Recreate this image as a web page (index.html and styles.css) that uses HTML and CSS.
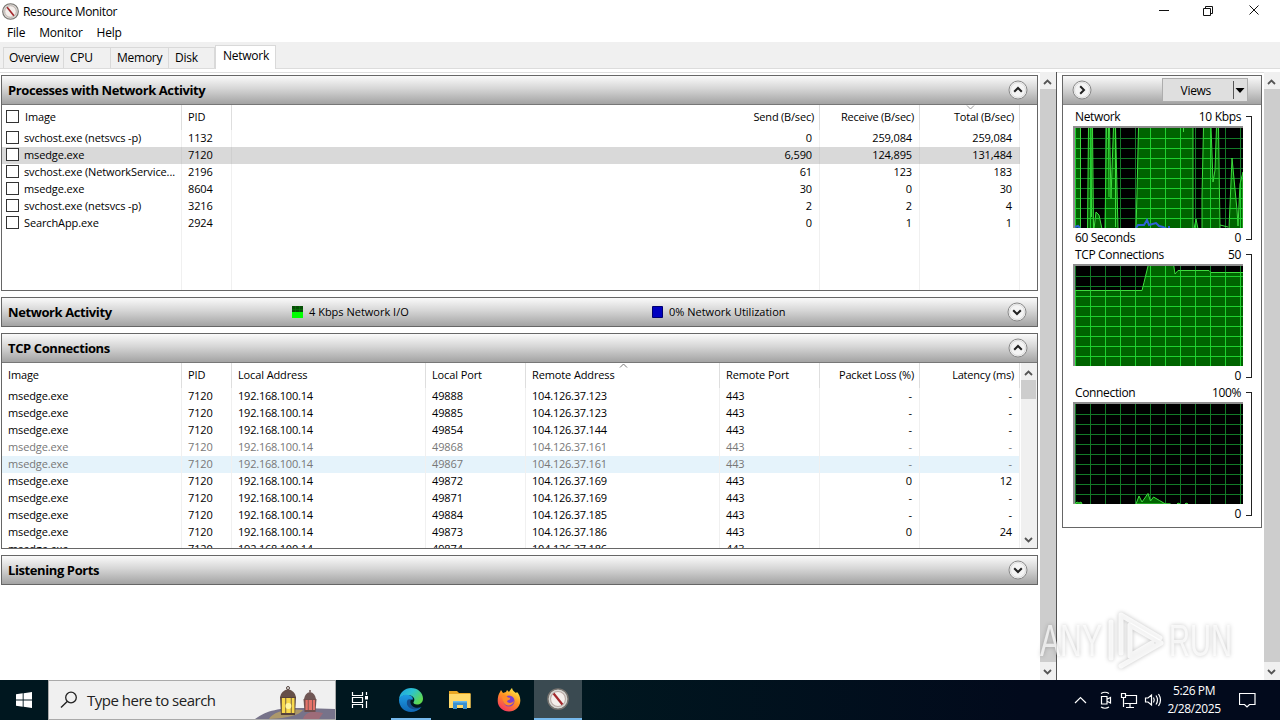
FILE: index.html
```html
<!DOCTYPE html>
<html lang="en">
<head>
    <meta charset="UTF-8">
    <title>Resource Monitor</title>
    <link rel="stylesheet" href="styles.css">
</head>
<body>
    <svg class="defs" width="0" height="0">
        <symbol id="up" viewBox="0 0 20 20"><circle cx="10" cy="10" r="9" fill="#f4f4f4" stroke="#888"/><circle cx="10" cy="10" r="7.5" fill="none" stroke="#dcdcdc"/><path d="M6.2 11.8 10 8l3.8 3.8" fill="none" stroke="#222" stroke-width="2"/></symbol>
        <symbol id="down" viewBox="0 0 20 20"><circle cx="10" cy="10" r="9" fill="#f4f4f4" stroke="#888"/><circle cx="10" cy="10" r="7.5" fill="none" stroke="#dcdcdc"/><path d="M6.2 8.2 10 12l3.8-3.8" fill="none" stroke="#222" stroke-width="2"/></symbol>
        <symbol id="right" viewBox="0 0 20 20"><circle cx="10" cy="10" r="9" fill="#f4f4f4" stroke="#888"/><circle cx="10" cy="10" r="7.5" fill="none" stroke="#dcdcdc"/><path d="M8.2 6.2 12 10l-3.8 3.8" fill="none" stroke="#222" stroke-width="2"/></symbol>
        <symbol id="s-up" viewBox="0 0 9 6"><path d="M1 5l3.5-3.5L8 5" fill="none" stroke="#555" stroke-width="1.8"/></symbol>
        <symbol id="s-down" viewBox="0 0 9 6"><path d="M1 1l3.5 3.5L8 1" fill="none" stroke="#555" stroke-width="1.8"/></symbol>
        <symbol id="gauge" viewBox="0 0 20 20"><circle cx="10" cy="10" r="9.2" fill="#d8d8d4" stroke="#77736f" stroke-width="1.3"/><circle cx="10" cy="10" r="6.8" fill="#f4efec" stroke="#b9a9a4"/><path d="M6 5l8 10" stroke="#a3282c" stroke-width="2"/></symbol>
        <symbol id="grid" viewBox="0 0 170 102"><path d="M2.5 1v101M17.5 1v101M32.5 1v101M47.5 1v101M62.5 1v101M77.5 1v101M92.5 1v101M107.5 1v101M122.5 1v101M137.5 1v101M152.5 1v101M167.5 1v101M2 12.5h168M2 22.5h168M2 32.5h168M2 42.5h168M2 52.5h168M2 62.5h168M2 72.5h168M2 82.5h168M2 92.5h168" fill="none" stroke="currentColor"/></symbol>
        <clipPath id="net-clip"><path id="net-area" d="M2 103V1h5.500v102zM14.500 103l1-102h4l1 102zM21 103l2-17 3 3 3 14zM32 103L33.500 1h3L38 72 40.500 1h2L45 103zM63 103l1-35L65.500 1H120v102zM121 103l2-10 2 10zM129 103V70L130.500 1H138l2 55 2-12 1.500-43h2L147 103zM156 103l3-71 5 52 1 16 2-42 3-12v58z"/></clipPath>
        <clipPath id="tcp-clip"><path id="tcp-area" d="M2 103V26.500h67l2-8L75.500 0h25l1.500 10 3-3.500h31l2 2h33V103z"/></clipPath>
    </svg>

    <div class="titlebar">
        <svg class="app-icon" width="17" height="17"><use href="#gauge"/></svg>
        <span class="title">Resource Monitor</span>
        <svg class="window-buttons" width="110" height="20" viewBox="0 0 110 20"><path d="M5 10.5h10M49.5 8.500h7v7h-7zM51.500 8.500v-2h7v7h-2M95.500 5.500l9 9M104.500 5.500l-9 9" fill="none" stroke="#111"/></svg>
    </div>
    <div class="menu"><span>File</span><span>Monitor</span><span>Help</span></div>
    <div class="tabs">
        <div class="tab overview">Overview</div>
        <div class="tab cpu">CPU</div>
        <div class="tab memory">Memory</div>
        <div class="tab disk">Disk</div>
        <div class="tab active">Network</div>
    </div>

    <div class="content">
        <div class="main">
            <section class="panel tall">
                <div class="panel-head"><b>Processes with Network Activity</b><svg class="toggle" width="20" height="20"><use href="#up"/></svg></div>
                <div class="table processes">
                    <div class="row head"><span><i class="check"></i>Image</span><span>PID</span><span class="num">Send (B/sec)</span><span class="num">Receive (B/sec)</span><span class="num">Total (B/sec)<svg class="sort" width="9" height="5"><path d="M1 .5l3.500 3.500L8 .5" fill="none" stroke="#999"/></svg></span></div>
                    <div class="row"><span><i class="check"></i>svchost.exe (netsvcs -p)</span><span>1132</span><span class="num">0</span><span class="num">259,084</span><span class="num">259,084</span></div>
                    <div class="row selected"><span><i class="check"></i>msedge.exe</span><span>7120</span><span class="num">6,590</span><span class="num">124,895</span><span class="num">131,484</span></div>
                    <div class="row"><span><i class="check"></i>svchost.exe (NetworkService...</span><span>2196</span><span class="num">61</span><span class="num">123</span><span class="num">183</span></div>
                    <div class="row"><span><i class="check"></i>msedge.exe</span><span>8604</span><span class="num">30</span><span class="num">0</span><span class="num">30</span></div>
                    <div class="row"><span><i class="check"></i>svchost.exe (netsvcs -p)</span><span>3216</span><span class="num">2</span><span class="num">2</span><span class="num">4</span></div>
                    <div class="row"><span><i class="check"></i>SearchApp.exe</span><span>2924</span><span class="num">0</span><span class="num">1</span><span class="num">1</span></div>
                    <div class="row filler"><span></span><span></span><span></span><span></span><span></span></div>
                </div>
            </section>

            <section class="panel">
                <div class="panel-head">
                    <b>Network Activity</b>
                    <div class="legend io"><svg width="12" height="12"><path fill="#064f06" d="M0 0h11v6H0z"/><path d="M3.500 0v6M7.500 0v6M0 3.500h11" stroke="#0a7a0a" stroke-width=".6"/><path fill="#0f0" d="M0 6h11v6H0z"/></svg>4 Kbps Network I/O</div>
                    <div class="legend util"><svg width="12" height="12"><path fill="#0000c0" stroke="#000070" d="M.5.5h10v11H.5z"/></svg>0% Network Utilization</div>
                    <svg class="toggle shifted" width="20" height="20"><use href="#down"/></svg>
                </div>
            </section>

            <section class="panel tall">
                <div class="panel-head"><b>TCP Connections</b><svg class="toggle" width="20" height="20"><use href="#up"/></svg></div>
                <div class="tcp-body">
                    <div class="table tcp">
                        <div class="row head"><span>Image</span><span>PID</span><span>Local Address</span><span>Local Port</span><span>Remote Address<svg class="sort" width="9" height="5"><path d="M1 4.500L4.500 1 8 4.500" fill="none" stroke="#777"/></svg></span><span>Remote Port</span><span class="num">Packet Loss (%)</span><span class="num">Latency (ms)</span></div>
                        <div class="row"><span>msedge.exe</span><span>7120</span><span>192.168.100.14</span><span>49888</span><span>104.126.37.123</span><span>443</span><span class="num">-</span><span class="num">-</span></div>
                        <div class="row"><span>msedge.exe</span><span>7120</span><span>192.168.100.14</span><span>49885</span><span>104.126.37.123</span><span>443</span><span class="num">-</span><span class="num">-</span></div>
                        <div class="row"><span>msedge.exe</span><span>7120</span><span>192.168.100.14</span><span>49854</span><span>104.126.37.144</span><span>443</span><span class="num">-</span><span class="num">-</span></div>
                        <div class="row closed"><span>msedge.exe</span><span>7120</span><span>192.168.100.14</span><span>49868</span><span>104.126.37.161</span><span>443</span><span class="num">-</span><span class="num">-</span></div>
                        <div class="row closed hover"><span>msedge.exe</span><span>7120</span><span>192.168.100.14</span><span>49867</span><span>104.126.37.161</span><span>443</span><span class="num">-</span><span class="num">-</span></div>
                        <div class="row"><span>msedge.exe</span><span>7120</span><span>192.168.100.14</span><span>49872</span><span>104.126.37.169</span><span>443</span><span class="num">0</span><span class="num">12</span></div>
                        <div class="row"><span>msedge.exe</span><span>7120</span><span>192.168.100.14</span><span>49871</span><span>104.126.37.169</span><span>443</span><span class="num">-</span><span class="num">-</span></div>
                        <div class="row"><span>msedge.exe</span><span>7120</span><span>192.168.100.14</span><span>49884</span><span>104.126.37.185</span><span>443</span><span class="num">-</span><span class="num">-</span></div>
                        <div class="row"><span>msedge.exe</span><span>7120</span><span>192.168.100.14</span><span>49873</span><span>104.126.37.186</span><span>443</span><span class="num">0</span><span class="num">24</span></div>
                        <div class="row"><span>msedge.exe</span><span>7120</span><span>192.168.100.14</span><span>49874</span><span>104.126.37.186</span><span>443</span><span class="num"></span><span class="num"></span></div>
                    </div>
                    <div class="scrollbar inner">
                        <svg width="9" height="6"><use href="#s-up"/></svg>
                        <div class="thumb"></div>
                        <svg width="9" height="6"><use href="#s-down"/></svg>
                    </div>
                </div>
            </section>

            <section class="panel">
                <div class="panel-head"><b>Listening Ports</b><svg class="toggle" width="20" height="20"><use href="#down"/></svg></div>
            </section>
        </div>
        <div class="scrollbar outer">
            <svg width="9" height="6"><use href="#s-up"/></svg>
            <div class="thumb"></div>
            <svg width="9" height="6"><use href="#s-down"/></svg>
        </div>

        <div class="side">
            <div class="charts">
                <div class="panel-head side-head">
                    <svg width="20" height="20"><use href="#right"/></svg>
                    <div class="views"><span>Views</span><svg width="14" height="18"><path d="M.5 0v18" stroke="#555"/><path d="M2.500 7h9L7 12z"/></svg></div>
                </div>
                <div class="chart">
                    <div class="chart-left">
                        <div class="chart-label"><span>Network</span><span>10 Kbps</span></div>
                        <svg class="plot" width="170" height="102">
                            <use href="#grid" class="dim"/>
                            <use href="#net-area" class="area"/>
                            <path class="peak" d="M110.500 1v5M18 1l.5 90M35.500 1l.5 70M42.500 1v100M147 99l8 2"/>
                            <g clip-path="url(#net-clip)"><use href="#grid" class="bright"/></g>
                            <path class="usage" d="M2 101l3-1 2 2M63 102l2-3h6l3-5 2 5 7-2 3 3 4 1 4 2M95 101h2"/>
                            <path class="frame" d="M1 102V1h169"/>
                        </svg>
                        <div class="chart-label bottom"><span>60 Seconds</span><span>0</span></div>
                    </div>
                    <div class="bracket"></div>
                </div>
                <div class="chart">
                    <div class="chart-left">
                        <div class="chart-label"><span>TCP Connections</span><span>50</span></div>
                        <svg class="plot" width="170" height="102">
                            <use href="#grid" class="dim"/>
                            <use href="#tcp-area" class="area"/>
                            <g clip-path="url(#tcp-clip)"><use href="#grid" class="bright"/></g>
                            <path class="frame" d="M1 102V1h169"/>
                        </svg>
                        <div class="chart-label bottom"><span></span><span>0</span></div>
                    </div>
                    <div class="bracket"></div>
                </div>
                <div class="chart">
                    <div class="chart-left">
                        <div class="chart-label"><span>Connection</span><span>100%</span></div>
                        <svg class="plot" width="170" height="102">
                            <use href="#grid" class="dim"/>
                            <path class="area" d="M2 102l2-2 2 1 2-1 1 2zM63 102l3-8 3 6 6-8.500 2.500 7.500 3-4 6 3.500 6 3.500 5 0zM104 102l1-1 2 1zM112 102l1-1 2 1z"/>
                            <path class="frame" d="M1 102V1h169"/>
                        </svg>
                        <div class="chart-label bottom"><span></span><span>0</span></div>
                    </div>
                    <div class="bracket"></div>
                </div>
            </div>
        </div>
        <div class="scrollbar far">
            <svg width="9" height="6"><use href="#s-up"/></svg>
            <div class="thumb"></div>
            <svg width="9" height="6"><use href="#s-down"/></svg>
        </div>
    </div>

    <svg class="watermark" width="200" height="66" viewBox="0 0 200 66">
        <g fill="#fff" fill-opacity=".72">
            <text x="4" y="48" textLength="62" lengthAdjust="spacingAndGlyphs">ANY</text>
            <text x="133" y="48" textLength="63" lengthAdjust="spacingAndGlyphs">RUN</text>
        </g>
        <g fill="none" stroke="#fff" stroke-opacity=".8" stroke-width="5" stroke-linejoin="round" stroke-linecap="round">
            <path d="M75 50V14"/>
            <path d="M85 45V7l39 23"/>
            <path d="M85 58l40-23-31-18v31l22-13"/>
        </g>
    </svg>

    <div class="taskbar">
        <div class="start"><svg width="16" height="16"><path d="M0 2.300L6.700 1.300v6.200H0zM7.600 1.200L16 0v7.500H7.600zM0 8.400h6.700v6.300L0 13.700zM7.600 8.400H16V16l-8.400-1.200z" fill="#fff"/></svg></div>
        <div class="search">
            <svg width="18" height="18"><circle cx="11" cy="6.500" r="5.300" fill="none" stroke="#222" stroke-width="1.300"/><path d="M7.200 10.500L1 16.500" stroke="#222" stroke-width="1.400"/></svg>
            <span>Type here to search</span>
            <svg class="lanterns" width="80" height="38" viewBox="0 0 80 38">
                <path d="M0 38C12 29 24 27 48 27l32 1v10z" fill="#77738a"/>
                <path d="M14 38c4-8 20-11 34-9-4 5-14 8-34 9z" fill="#c3a85e" opacity=".7"/>
                <path d="M48 38c2-8 12-8 20-6l-4 6z" fill="#b9686e" opacity=".6"/>
                <circle cx="33" cy="7" r="1.500" fill="none" stroke="#54433d"/>
                <path d="M25 16q1-6 8-8 7 2 8 8z" fill="#665049"/>
                <path d="M25 16h16l-1 18H26z" fill="#57423a"/>
                <path d="M26.800 17h3.600v15h-3.600zM31.200 17h4.600v15h-4.600zM36.600 17h2.900v15h-2.900z" fill="#f9d94c"/>
                <circle cx="33.400" cy="25" r="3" fill="#fff6a0"/>
                <circle cx="55" cy="10" r="1" fill="#705755"/>
                <path d="M49 18q1-6 6-7 5 1 6 7z" fill="#705755"/>
                <path d="M48.500 18h13l-1 13h-11z" fill="#70504e"/>
                <path d="M50.500 19h2.300v10h-2.300zM53.600 19h3.600v10h-3.600zM58 19h2v10h-2z" fill="#e47269"/>
            </svg>
        </div>
        <div class="task first"><svg width="18" height="18"><path d="M1.500 1v3.500h10V1M1.500 17v-3.500h10V17M1.500 6.500h10v5h-10zM15.500 1v3M15.500 10v7" fill="none" stroke="#fff" stroke-width="1.200"/><path d="M14 5h3v3.500h-3z" fill="#fff"/></svg></div>
        <div class="task running">
            <svg width="24" height="24" viewBox="0 0 24 24">
                <defs>
                    <linearGradient id="edge-a" x1="0" y1="0" x2="1" y2=".6"><stop offset="0" stop-color="#1e9de0"/><stop offset=".5" stop-color="#2cc3d0"/><stop offset="1" stop-color="#5fd94f"/></linearGradient>
                    <linearGradient id="edge-b" x1="0" y1="0" x2="0" y2="1"><stop offset="0" stop-color="#1d9be3"/><stop offset="1" stop-color="#1067b5"/></linearGradient>
                </defs>
                <path d="M0 11C1 4 6 0 12 0c7 0 12 5 12 10.500 0 4-3 6-6 6-2.500 0-4-1-3.500-2.200C17 11 14 7 9 7c-4 0-7 1.500-9 4z" fill="url(#edge-a)"/>
                <path d="M0 12c0-3 4-5.500 8-5.200 4 .2 6 2.500 6 4.700-5-1-6 6.500 1 8.500 3 .8 5.500 0 7.500-1C20 22.500 16 24 12 24 5 24 0 18.500 0 12z" fill="url(#edge-b)"/>
                <path d="M8.500 12c-2 4 .5 9 7 9.500 3 0 5.500-1.500 7-3-4 2.500-10 1-11-3.500-.3-1.200 0-2.500.5-3.500-1.500-.5-3-.3-3.500.5z" fill="#154d8d"/>
            </svg>
        </div>
        <div class="task"><svg width="22" height="20"><path d="M0 1h8l2 2h11.500v15H0z" fill="#e9a723"/><path d="M0 4h21.500v14H0z" fill="#ffd96a"/><path d="M4 19v-8h14v8h-4v-4H8v4z" fill="#3990d0"/><path d="M4 11h14v1.500H4z" fill="#68b9ec"/></svg></div>
        <div class="task">
            <svg width="24" height="24" viewBox="0 0 24 24">
                <defs><linearGradient id="fox" x1=".8" y1="0" x2=".2" y2="1"><stop offset="0" stop-color="#fff04a"/><stop offset=".45" stop-color="#ff9422"/><stop offset="1" stop-color="#f52f65"/></linearGradient></defs>
                <path d="M3 4l1-2 2 3 3-1 1-2 2 2c1-2 2-3 3-4 .5 3 3 4 4 5l1-1c2 2 3.500 5 3.300 9C23 19 18 23.500 12 23.500S.7 19 .7 13C.7 9 1.500 6 3 4z" fill="url(#fox)"/>
                <circle cx="12" cy="13" r="5.500" fill="#7a3fd0"/>
                <path d="M5 8c3-1 5 0 6 1.500 2 0 2.500.8 2 1.800-1 1-3 1-3 2.200 1 2 5 2 7-.5-1 5-8 6-10 2C5.500 13 5.500 10 5 8z" fill="#ff8c28"/>
            </svg>
        </div>
        <div class="task current"><svg width="22" height="22"><use href="#gauge"/></svg></div>
        <div class="tray">
            <svg width="90" height="20" viewBox="0 0 90 20" fill="none" stroke="#fff" stroke-width="1.200">
                <path d="M1 13l5.500-5.500L12 13"/>
                <path d="M27.500 6.500h5.500v7.500h-5.500zM33.500 9l3-1.500v5.500l-3-1.500M27 3.500q4-2.500 8 0M27 17q4 2.500 8 0"/>
                <path d="M51 5.500h11.500v8H50.500M56 14v3M52 17.500h8M47.500 3.500h4v4h-4zM49.500 8v9"/>
                <path d="M71.500 8h2.500l3.500-3v10L74 12h-2.500zM79.500 7.500q1.500 2.500 0 5M82 5.500q3 4.500 0 9M84.500 4q4 6 0 12"/>
            </svg>
            <div class="clock">5:26 PM<br>2/28/2025</div>
            <svg width="17" height="17"><path d="M.5 1.500h15.500v11h-5.500L8 15l-2.500-2.500h-5z" fill="none" stroke="#fff" stroke-width="1.200"/></svg>
        </div>
    </div>
</body>
</html>
```
FILE: styles.css
```css
* {
    margin: 0;
    padding: 0;
    box-sizing: border-box;
}

body {
    width: 1280px;
    height: 720px;
    overflow: hidden;
    background: #fff;
    color: #000;
    font-family: "Open Sans", "Noto Sans", sans-serif;
    font-size: 12px;
    display: flex;
    flex-direction: column;
}

svg {
    display: block;
    flex: none;
}

.defs {
    position: absolute;
}

.titlebar {
    height: 23px;
    display: flex;
    align-items: center;
    padding: 0 16px 0 2px;
}

.title {
    margin-left: 4px;
    letter-spacing: -0.35px;
}

.window-buttons {
    margin: 0 0 3px auto;
}

.menu {
    height: 19px;
    display: flex;
    gap: 14px;
    padding-left: 7px;
    line-height: 20px;
    letter-spacing: -0.2px;
}

.tabs {
    height: 27px;
    background: #f0f0f0;
    display: flex;
    align-items: flex-end;
    padding-left: 3px;
    border-bottom: 1px solid #dcdcdc;
    flex: none;
}

.tab {
    height: 21px;
    border: 1px solid #d9d9d9;
    border-bottom: none;
    border-left: none;
    line-height: 19px;
    padding-left: 6px;
    letter-spacing: -0.25px;
}

.overview {
    width: 61px;
    border-left: 1px solid #d9d9d9;
    padding-left: 5px;
}

.cpu {
    width: 47px;
}

.memory {
    width: 58px;
}

.disk {
    width: 46px;
}

.tab.active {
    width: 61px;
    height: 24px;
    background: #fff;
    border-left: 1px solid #d9d9d9;
    padding-left: 7px;
    margin-bottom: -1px;
}

.content {
    height: 611px;
    flex: none;
    display: flex;
    border-top: 3px solid #fff;
    box-shadow: inset 0 1px #dedede;
}

.main {
    width: 1040px;
    padding: 3px 2px 0 1px;
    display: flex;
    flex-direction: column;
    gap: 6px;
}

.panel {
    width: 1037px;
    height: 30px;
    border: 1px solid #666;
    flex: none;
    overflow: hidden;
}

.panel.tall {
    height: 216px;
}

.panel-head {
    height: 28px;
    background: linear-gradient(#fafafa, #d6d6d6 45%, #a3a3a3);
    display: flex;
    align-items: center;
    padding: 0 9px 0 6px;
    position: relative;
}

.tall .panel-head {
    height: 29px;
    border-bottom: 1px solid #777;
}

.panel-head b {
    font-size: 13px;
    letter-spacing: -0.4px;
}

.toggle {
    margin: 0 0 1px auto;
}

.shifted {
    margin-right: 1px;
}

.legend {
    position: absolute;
    top: 6px;
    font-size: 11px;
    line-height: 15px;
    display: flex;
    gap: 5px;
    align-items: center;
}

.io {
    left: 290px;
}

.util {
    left: 650px;
}

.table {
    font-size: 11px;
    letter-spacing: -0.12px;
    height: 185px;
    display: flex;
    flex-direction: column;
}

.row {
    display: grid;
    height: 17px;
    line-height: 16px;
    flex: none;
}

.processes .row {
    grid-template-columns: 180px 50px 588px 100px 100px;
}

.tcp .row {
    grid-template-columns: 180px 50px 194px 100px 194px 100px 100px 100px;
}

.tcp .row:not(.head) span:nth-child(3),
.tcp .row:not(.head) span:nth-child(5) {
    letter-spacing: -0.22px;
}

.row span {
    padding-left: 6px;
    border-right: 1px solid #f0f0f0;
    white-space: nowrap;
    overflow: hidden;
}

.row .num {
    text-align: right;
    padding-right: 7px;
}

.row.head {
    height: 25px;
    line-height: 24px;
}

.head span {
    border-right-color: #dedede;
    position: relative;
}

.row.head .num {
    padding-right: 5px;
    letter-spacing: -0.2px;
}

.row.filler {
    height: auto;
    flex: 1;
}

.selected {
    width: 1018px;
    background: #d9d9d9;
}

.selected span {
    border-color: #cfcfcf;
}

.closed {
    color: #777;
}

.hover {
    background: #e5f3fb;
}

.check {
    display: inline-block;
    width: 13px;
    height: 13px;
    border: 1px solid #333;
    background: #fff;
    vertical-align: -2px;
    margin: 0 5px 0 -2px;
}

.head .check {
    margin-right: 6px;
}

.sort {
    position: absolute;
    left: 50%;
    top: 0;
    margin-left: -4px;
}

.tcp-body {
    display: flex;
}

.tcp {
    width: 1018px;
}

.scrollbar {
    width: 16px;
    background: #f0f0f0;
    display: flex;
    flex-direction: column;
    align-items: center;
    padding: 7px 0 5px;
    flex: none;
}

.scrollbar svg {
    margin-right: 1px;
}

.inner {
    margin-left: 1px;
    height: 185px;
}

.inner svg {
    margin-right: 2px;
}

.inner .thumb {
    height: 19px;
    width: 15px;
    margin-top: 4px;
    margin-right: 1px;
    margin-bottom: auto;
    background: #cdcdcd;
}

.outer .thumb,
.far .thumb {
    width: 16px;
    flex: 1;
    margin: 4px 0 7px;
    background: #cdcdcd;
}

.side {
    width: 208px;
    border-left: 1px solid #555;
    padding: 3px 2px 0 5px;
}

.charts {
    width: 200px;
    height: 453px;
    border: 1px solid #666;
}

.side-head {
    height: 29px;
    border-bottom: 1px solid #888;
    padding-left: 9px;
    padding-right: 13px;
}

.views {
    margin-left: auto;
    width: 86px;
    height: 24px;
    border: 1px solid #adadad;
    background: #dfdfdf;
    display: flex;
    align-items: center;
    justify-content: flex-end;
    gap: 22px;
    letter-spacing: -0.3px;
}

.chart {
    display: flex;
    padding-left: 10px;
    height: 138px;
    font-size: 12px;
}

.chart-left {
    width: 170px;
}

.chart-label {
    height: 21px;
    line-height: 24px;
    display: flex;
    justify-content: space-between;
    padding: 0 2px 0 2px;
    letter-spacing: -0.35px;
}

.chart-label.bottom {
    height: 15px;
    line-height: 19px;
}

.plot {
    background: #000;
}

.bracket {
    width: 6px;
    height: 124px;
    margin: 11px 0 0 3px;
    border: 1px solid #222;
    border-left: none;
}

.area {
    fill: #006400;
    stroke: #3fdc3f;
}

.peak {
    fill: none;
    stroke: #3fdc3f;
}

.bright {
    color: #1fd02f;
}

.dim {
    color: #137a27;
}

.usage {
    fill: none;
    stroke: #2f62d8;
    stroke-width: 2;
}

.frame {
    fill: none;
    stroke: #8f8f8f;
    stroke-width: 2;
}

.watermark {
    position: absolute;
    left: 1036px;
    top: 608px;
    font-family: "Liberation Sans", sans-serif;
    font-size: 44px;
    filter: drop-shadow(0 0 2px rgba(0, 0, 0, 0.3));
}

.taskbar {
    height: 40px;
    flex: none;
    background: linear-gradient(90deg, #00171f, #00171f 45%, #020a1c 80%);
    display: flex;
    color: #fff;
}

.start {
    width: 48px;
    padding: 12px 0 0 16px;
}

.search {
    width: 288px;
    background: #f0f0f0;
    border: 1px solid #aaa;
    color: #222;
    font-size: 15px;
    display: flex;
    align-items: center;
    padding-left: 11px;
    overflow: hidden;
}

.search span {
    margin-left: 9px;
    letter-spacing: -0.5px;
    white-space: nowrap;
}

.lanterns {
    margin-left: auto;
}

.task {
    width: 48px;
    margin-right: 1px;
    display: flex;
    align-items: center;
    justify-content: center;
}

.first {
    margin-right: 3px;
}

.running {
    background: linear-gradient(#76b9ed, #76b9ed) 4px 100% / 40px 2px no-repeat;
}

.current {
    background: #3a4a51;
    border-bottom: 2px solid #76b9ed;
}

.tray {
    margin-left: auto;
    display: flex;
    align-items: center;
    padding-right: 24px;
}

.clock {
    width: 66px;
    margin: 0 12px 0 -3px;
    text-align: center;
    line-height: 18px;
    letter-spacing: -0.4px;
}
```
